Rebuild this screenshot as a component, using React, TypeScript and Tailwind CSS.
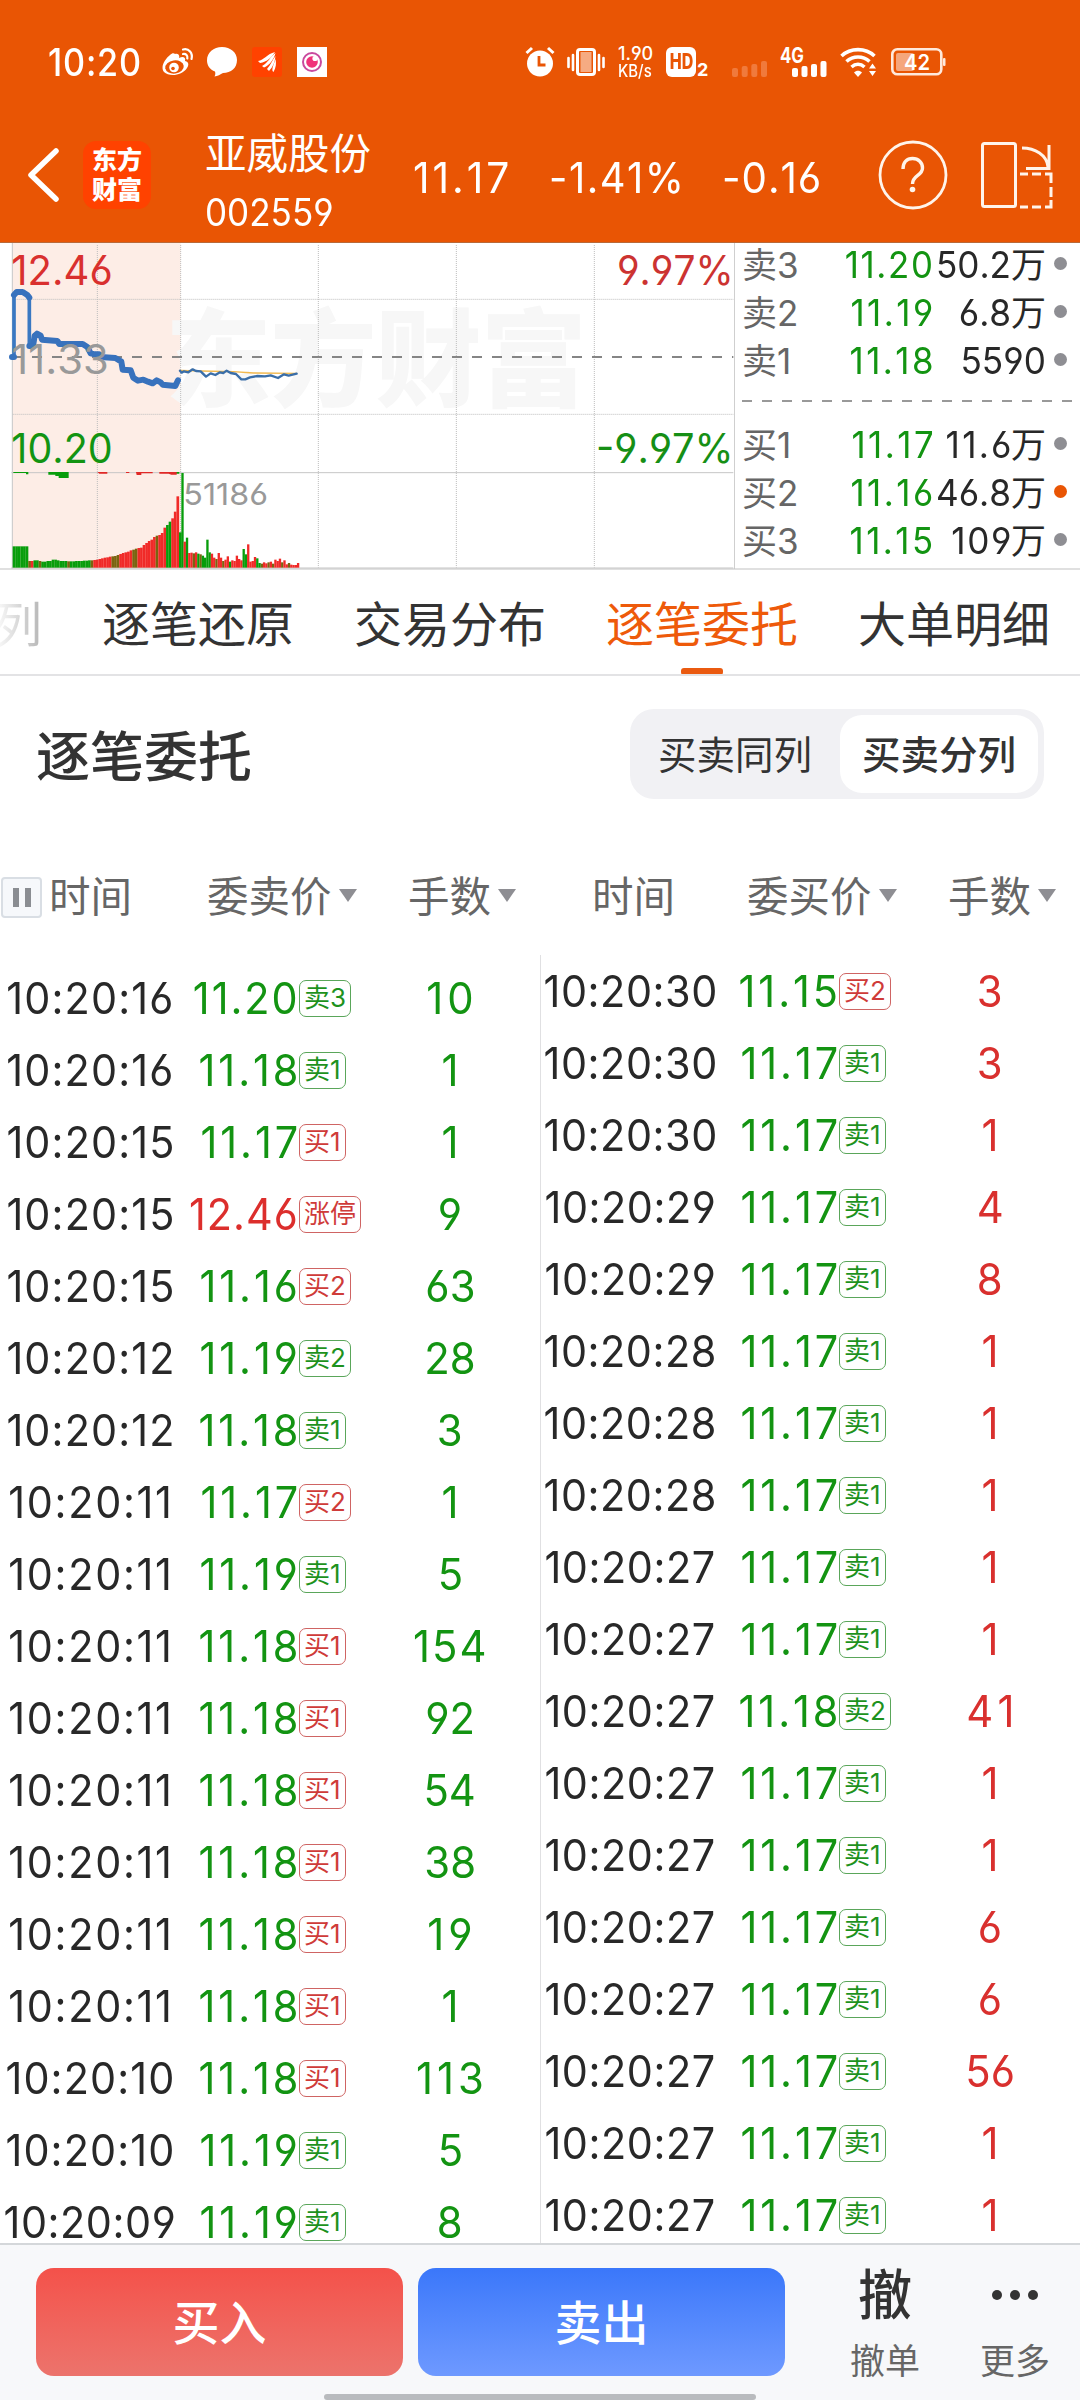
import React from 'react';

type Side = 'up' | 'down';

interface Order {
  time: string;
  price: string;
  tag: string;
  lots: number;
}

interface Quote {
  label: string;
  price: string;
  volume: string;
  active?: boolean;
}

const parseOrders = (rows: string[]): Order[] =>
  rows.map((row) => {
    const [time, price, tag, lots] = row.split(' ');
    return { time: `10:20:${time}`, price, tag, lots: Number(lots) };
  });

const sellOrders = parseOrders([
  '16 11.20 卖3 10',
  '16 11.18 卖1 1',
  '15 11.17 买1 1',
  '15 12.46 涨停 9',
  '15 11.16 买2 63',
  '12 11.19 卖2 28',
  '12 11.18 卖1 3',
  '11 11.17 买2 1',
  '11 11.19 卖1 5',
  '11 11.18 买1 154',
  '11 11.18 买1 92',
  '11 11.18 买1 54',
  '11 11.18 买1 38',
  '11 11.18 买1 19',
  '11 11.18 买1 1',
  '10 11.18 买1 113',
  '10 11.19 卖1 5',
  '09 11.19 卖1 8',
]);

const buyOrders = parseOrders([
  '30 11.15 买2 3',
  '30 11.17 卖1 3',
  '30 11.17 卖1 1',
  '29 11.17 卖1 4',
  '29 11.17 卖1 8',
  '28 11.17 卖1 1',
  '28 11.17 卖1 1',
  '28 11.17 卖1 1',
  '27 11.17 卖1 1',
  '27 11.17 卖1 1',
  '27 11.18 卖2 41',
  '27 11.17 卖1 1',
  '27 11.17 卖1 1',
  '27 11.17 卖1 6',
  '27 11.17 卖1 6',
  '27 11.17 卖1 56',
  '27 11.17 卖1 1',
  '27 11.17 卖1 1',
]);

const asks: Quote[] = [
  { label: '卖3', price: '11.20', volume: '50.2万' },
  { label: '卖2', price: '11.19', volume: '6.8万' },
  { label: '卖1', price: '11.18', volume: '5590' },
];

const bids: Quote[] = [
  { label: '买1', price: '11.17', volume: '11.6万' },
  { label: '买2', price: '11.16', volume: '46.8万', active: true },
  { label: '买3', price: '11.15', volume: '109万' },
];

// bar colours: r = red, g = green, d = dark overlap
const auctionHeights = [
  64, 64, 64, 64, 64, 64, 20, 20, 22, 22, 20, 18, 18, 20, 20, 24, 24, 22, 20, 20, 20, 19, 19, 19, 20, 20, 20, 21, 21, 22,
  22, 23, 24, 26, 28, 30, 31, 33, 34, 35, 38, 41, 44, 46, 48, 52, 54, 57, 59, 60, 68, 74, 80, 84, 92, 96, 98, 104, 120,
  128, 138, 148, 168, 214,
];
const auctionColors = 'ggggggdrggdggggggggggdggggggggdrrrrrrrdddrrrrrddrrrrrrrdrrrggrrrg';

const sessionHeights = [
  284, 78, 90, 44, 45, 43, 46, 42, 40, 36, 30, 84, 46, 42, 30, 26, 44, 30, 20, 24, 34, 18, 22, 20, 36, 26, 22, 56, 40,
  70, 18, 20, 32, 28, 14, 12, 16, 13, 16, 18, 12, 24, 20, 27, 16, 22, 10, 14, 9, 8, 8, 14,
];
const sessionColors = 'grgrrdrgdggggrrdrrdrrgrrrrrggrrrrggdrrdrdrrrdrrdrrrrr';

const barFill: Record<string, string> = { r: '#f02a28', g: '#079d0b', d: '#7a6410' };

const numClass =
  "inline-block [font-kerning:none] font-['Inter','Noto_Sans_CJK_SC',sans-serif] [font-feature-settings:'cv03','cv04']";

// Digits set slightly condensed; every "1" gets extra room so the columns stay even
const Num: React.FC<{ value: string | number; className?: string }> = ({ value, className = '' }) => {
  const text = String(value);
  const ones = text.split('1').length - 1;
  const spacing = text.length > 1 ? (ones * 0.096) / (text.length - 1) : 0;
  return (
    <span className={`${numClass} ${className}`} style={{ letterSpacing: `${spacing}em`, marginRight: `${-spacing}em` }}>
      {text}
    </span>
  );
};

const StatusBar: React.FC = () => (
  <div className="flex h-[110px] items-center pt-[14px] pl-[48px] text-white">
    <span className="w-[114px] text-[38px] leading-none font-medium">
      <Num value="10:20" className="origin-left scale-x-[0.9]" />
    </span>
    <svg width="32" height="30" viewBox="0 0 32 30" fill="none">
      <path
        d="M13 7C16 6 18 8 17 11C21 9 24 10 23 14C27 15 27 18 25 21C20 29 7 30 2 25C-2 20 3 12 8 8C10 6 12 6 13 7Z"
        fill="#fff"
      />
      <ellipse cx="12.5" cy="20" rx="9.3" ry="6.6" fill="#e95504" transform="rotate(-8 12.5 20)" />
      <circle cx="12" cy="20.500" r="4.800" fill="#fff" />
      <circle cx="11" cy="21.500" r="1.800" fill="#e95504" />
      <path d="M21 2.500C27 1 31 6 29.500 12M21 7C24 6.500 26 8.500 25.300 11.500" stroke="#fff" strokeWidth="2.200" strokeLinecap="round" />
    </svg>
    <svg width="30" height="30" viewBox="0 0 30 30" className="ml-[13px]" fill="#fff">
      <path d="M15 0C23.500 0 30 5.500 30 13C30 21 24 26 16 26C13.500 27.500 10.500 29 7.500 29.500C8.500 28 8.500 26 8 24.500C3 22.500 0 18.500 0 13.500C0 5.500 6.500 0 15 0Z" />
    </svg>
    <svg width="30" height="30" viewBox="0 0 30 30" className="ml-[15px]">
      <rect width="30" height="30" rx="3" fill="#ff4200" />
      <g fill="#fff">
        <path d="M6 14C12 13 15 7 23 5C20 10 15 15 8 16Z" />
        <path d="M10 19C16 16 18 10 23.500 6C22 12 18 18 12 20.500Z" />
        <path d="M15 22C19 18 20 13 23.500 9C23 15 21 20 17 24Z" />
        <path d="M20.500 24C20 20 22 17 23.500 12C24.500 16 24 21 21.500 25Z" />
      </g>
    </svg>
    <svg width="30" height="30" viewBox="0 0 30 30" className="ml-[15px]">
      <rect width="30" height="30" fill="#fff" />
      <circle cx="15" cy="15" r="9" fill="none" stroke="#c84a9e" strokeWidth="2" />
      <circle cx="15" cy="15" r="5.800" fill="#f0327a" />
      <circle cx="18" cy="11.500" r="2.600" fill="#fff" />
    </svg>
    <svg width="30" height="32" viewBox="0 0 30 32" className="ml-[198px]">
      <circle cx="15" cy="17.500" r="13" fill="#fff" />
      <path d="M1.500 7L7 2M28.500 7L23 2" stroke="#fff" strokeWidth="3" />
      <path d="M14 10V19H20.500" stroke="#e95504" strokeWidth="2.800" fill="none" />
    </svg>
    <svg width="38" height="30" viewBox="0 0 38 30" className="ml-[12px]" stroke="#fff">
      <rect x="10.500" y="2.500" width="17" height="25" rx="2.500" fill="none" strokeWidth="3" />
      <rect x="13.500" y="5" width="11" height="20" fill="#f6ab82" stroke="none" />
      <path d="M6 8V23M1.500 11V20M32 8V23M36.500 11V20" strokeWidth="2.600" strokeLinecap="round" />
    </svg>
    <div className="ml-[13px] w-[48px] text-[18px] leading-[17px] font-medium">
      <div className={`${numClass} origin-left`}>1.90</div>
      <div className={`${numClass} origin-left scale-x-[0.88] text-[17px]`}>KB/s</div>
    </div>
    <div className="flex items-end">
      <div className="flex h-[30px] w-[30px] items-center justify-center rounded-[6px] bg-white text-[21px] font-extrabold text-[#e95504]">
        <span className="inline-block scale-x-[0.76]">HD</span>
      </div>
      <span className="ml-[1px] text-[18px] leading-[14px] font-bold">2</span>
    </div>
    <svg width="36" height="30" viewBox="0 0 36 30" className="ml-[24px]" fill="#f07a3c">
      <rect x="0" y="21" width="6" height="9" rx="2" />
      <rect x="9.700" y="19" width="6" height="11" rx="2" />
      <rect x="19.300" y="17" width="6" height="13" rx="2" />
      <rect x="29" y="14" width="6" height="16" rx="2" />
    </svg>
    <svg width="48" height="30" viewBox="0 0 48 30" className="ml-[12px]" fill="#fff">
      <text x="0" y="15.500" fontSize="21" fontWeight="700" textLength="24" lengthAdjust="spacingAndGlyphs">
        4G
      </text>
      <rect x="12" y="21" width="6" height="9" rx="2" />
      <rect x="21.500" y="19" width="6" height="11" rx="2" />
      <rect x="31" y="17" width="6" height="13" rx="2" />
      <rect x="40.500" y="14" width="6" height="16" rx="2" />
    </svg>
    <svg width="37" height="30" viewBox="0 0 37 30" className="ml-[12px]" fill="none" stroke="#fff" strokeWidth="3.600">
      <path d="M1.500 9C10.500 0.500 25.500 0.500 34.500 9" />
      <path d="M6.500 14.500C13 8.500 23 8.500 29.500 14.500" />
      <path d="M11.500 20C15.500 16.500 20.500 16.500 24.500 20" />
      <path d="M14 25.500C16.500 23 19.500 23 22 25.500L18 30Z" fill="#fff" stroke="none" />
      <path d="M29 21.500L32.500 16.500L36 21.500ZM29 24L32.500 29L36 24Z" fill="#fff" stroke="none" />
    </svg>
    <svg width="55" height="30" viewBox="0 0 55 30" className="ml-[14px]">
      <rect x="1.300" y="2.300" width="49" height="25" rx="5" fill="none" stroke="#ffe9dc" strokeWidth="2.600" />
      <rect x="5" y="6" width="18" height="18" rx="2" fill="#f5a67c" />
      <rect x="52" y="11" width="2.500" height="8" rx="1" fill="#ffe9dc" />
      <text x="13" y="23" fontSize="22" fontWeight="600" fill="#fff" textLength="26" lengthAdjust="spacingAndGlyphs">
        42
      </text>
    </svg>
  </div>
);

const StockHeader: React.FC = () => (
  <div className="flex h-[132px] items-start pl-[26px] text-white">
    <svg width="34" height="58" viewBox="0 0 34 58" className="mt-[36px]" fill="none">
      <path d="M30 5L5 29L30 53" stroke="#fff" strokeWidth="5.500" strokeLinecap="round" strokeLinejoin="round" />
    </svg>
    <div className="mt-[31px] ml-[23px] flex h-[68px] w-[68px] flex-col items-center justify-center rounded-[13px] bg-[#ff4200] text-[25px] leading-[30px] font-black">
      <span>东方</span>
      <span>财富</span>
    </div>
    <div className="ml-[54px] w-[208px]">
      <div className="mt-[19px] text-[41.5px] leading-[50px] whitespace-nowrap">亚威股份</div>
      <div className="mt-[14px] text-[37.5px] leading-[40px]">
        <span className={`${numClass} origin-left scale-x-[0.935]`}>002559</span>
      </div>
    </div>
    <div className="mt-[42px] flex text-[42px] leading-[52px] whitespace-nowrap">
      <span className="w-[136px]">
        <Num value="11.17" className="origin-left scale-x-[0.97]" />
      </span>
      <span className="w-[173px]">
        <Num value="-1.41%" className="origin-left scale-x-[0.95]" />
      </span>
      <span className="w-[156px]">
        <Num value="-0.16" className="origin-left scale-x-[0.96]" />
      </span>
    </div>
    <svg width="70" height="70" viewBox="0 0 70 70" className="mt-[30px]" fill="none" stroke="#fff4ea">
      <circle cx="35" cy="35" r="33" strokeWidth="2.800" />
      <path d="M25 29C25 22 29 18.500 34.500 18.500C40.500 18.500 44.500 22.500 44.500 28C44.500 36 34.500 35 34.500 44" strokeWidth="3.400" />
      <circle cx="34.500" cy="49.500" r="2.800" fill="#fff4ea" stroke="none" />
    </svg>
    <svg width="74" height="70" viewBox="0 0 74 70" className="mt-[30px] ml-[33px]" fill="none" stroke="#fff4ea" strokeWidth="3">
      <rect x="1.500" y="3.500" width="33" height="63" rx="2" />
      <path d="M41 8C54 8 66 15 67 27M68 5V28.500H45" />
      <path d="M39 34H47M51 34H60M64 34H70V43M70 47V57M70 60V67H64M60 67H51M47 67H39" />
    </svg>
  </div>
);

const TrendChart: React.FC = () => (
  <svg width="735" height="326" viewBox="0 0 735 326" className="shrink-0">
    <g transform="translate(0 -8) scale(0.33333)">
      <rect x="38" y="24" width="504" height="976" fill="#fdede6" />
      <text
        x="496"
        y="488"
        fontSize="318"
        fontWeight="900"
        fill="#f7f7f7"
        textLength="1264"
        lengthAdjust="spacing"
      >
        东方财富
      </text>
      <g stroke="#bcbcbc" strokeWidth="3" strokeDasharray="3 3" fill="none">
        <path d="M292 30V998M542 30V998M955 30V998M1369 30V998M1783 30V998" />
        <path d="M38 193H2200M38 538H2200" />
      </g>
      <path d="M37 24V1000M34 713H2200M34 999H2200M2204 24V1003" stroke="#c6c6c6" strokeWidth="3" fill="none" />
      <path d="M36 366H2200" stroke="#858585" strokeWidth="6" strokeDasharray="30 30" />

      {auctionHeights.map((h, i) => (
        <rect key={i} x={38 + i * 7.8} y={998 - h} width={8} height={h} fill={barFill[auctionColors[i]]} />
      ))}
      <rect x="537" y="892" width="8" height="106" fill={barFill.g} />
      {sessionHeights.map((h, i) => (
        <rect key={i} x={544 + i * 6.8} y={998 - h} width={7} height={h} fill={barFill[sessionColors[i]]} />
      ))}
      <path d="M40 711H85V718H78V714H40ZM145 711H206V729H176V723H166V719H145ZM528 711H538V716H528Z" fill="#079d0b" />
      <path d="M292 711H322V716H298ZM378 711H388V714H378ZM408 711H458V715H424V720H410ZM478 711H530V719H514L506 716H478Z" fill="#e02826" />

      <g fill="none" strokeLinejoin="round" strokeLinecap="round">
        <path d="M542 406L600 408L700 410L760 414L890 415" stroke="#f2b84c" strokeWidth="4" />
        <path
          d="M42 366V180M88 184V330"
          stroke="#3a78c2"
          strokeWidth="11"
        />
        <path
          d="M36 366H42M42 180L50 171H68L82 180L88 188M88 333H99L104 302L111 296L122 302L126 314L172 318L178 327H248L262 336L272 355L285 358H298L302 366L346 369L364 380L368 404L392 406L400 428L414 437L430 434L444 440L458 445L470 436L482 442L488 449L526 453L534 436"
          stroke="#3872bd"
          strokeWidth="18"
        />
        <path
          d="M540 407L545 413L552 409L565 412L578 403L588 408L602 409L618 425L632 415L646 420L660 412L670 414L680 407L692 414L708 417L724 433L736 433L750 427L772 423L795 424L812 421L834 429L852 418L866 422L890 416"
          stroke="#3a6ea8"
          strokeWidth="7"
        />
      </g>

      <g className="font-['Inter',sans-serif] [font-feature-settings:'cv03','cv04'] [font-kerning:none]" fontSize="122">
        <text x="34" y="150" fill="#d9302e" textLength="304" lengthAdjust="spacingAndGlyphs">
          12.46
        </text>
        <text x="34" y="416" fill="#999" textLength="292" lengthAdjust="spacingAndGlyphs">
          11.33
        </text>
        <text x="34" y="683" fill="#139412" textLength="304" lengthAdjust="spacingAndGlyphs">
          10.20
        </text>
        <text x="1851" y="150" fill="#cc3331" textLength="350" lengthAdjust="spacingAndGlyphs">
          9.97%
        </text>
        <text x="1788" y="683" fill="#168f15" textLength="413" lengthAdjust="spacingAndGlyphs">
          -9.97%
        </text>
        <text x="550" y="810" fontSize="91" fill="#999" textLength="254" lengthAdjust="spacingAndGlyphs">
          51186
        </text>
      </g>
    </g>
  </svg>
);

const QuoteRow: React.FC<{ quote: Quote }> = ({ quote }) => (
  <div className="flex h-[48px] items-center text-[35px] leading-[48px] whitespace-nowrap">
    <span className="w-[60px] text-[#666]">
      <span className={`${numClass} origin-left`}>{quote.label}</span>
    </span>
    <span className="w-[131px] text-right text-[37px] text-[#139412]">
      <Num value={quote.price} className="origin-right scale-x-[0.94]" />
    </span>
    <span className="flex w-[113px] items-center justify-end text-[#282828]">
      <Num value={quote.volume.replace('万', '')} className="origin-right scale-x-[0.95] text-[37px]" />
      {quote.volume.endsWith('万') && <span>万</span>}
    </span>
    <span className={`-mt-[3px] ml-[8px] h-[13px] w-[13px] rounded-full ${quote.active ? 'bg-[#e95504]' : 'bg-[#8e8e93]'}`} />
  </div>
);

const OrderBook: React.FC = () => (
  <div className="-mt-[2px] flex-1 pl-[7px]">
    {asks.map((quote) => (
      <QuoteRow key={quote.label} quote={quote} />
    ))}
    <svg width="332" height="36" viewBox="0 0 332 36" className="block">
      <path d="M0 16H332" stroke="#999" strokeWidth="2" strokeDasharray="10 10" />
    </svg>
    {bids.map((quote) => (
      <QuoteRow key={quote.label} quote={quote} />
    ))}
  </div>
);

const Tabs: React.FC = () => (
  <div className="flex h-[106px] justify-end gap-[60px] overflow-hidden border-b-2 border-[#e3e3e5] pr-[30px] text-[48px] leading-[110px] whitespace-nowrap text-[#333]">
    <span className="bg-gradient-to-r from-white from-75% to-[#b5b5b5] bg-clip-text text-transparent">买卖队列</span>
    <span>逐笔还原</span>
    <span>交易分布</span>
    <span className="relative text-[#ee5a0a]">
      逐笔委托
      <i className="absolute top-[98px] left-[75px] h-[7px] w-[42px] rounded-[3px] bg-[#ea5a10]" />
    </span>
    <span>大单明细</span>
  </div>
);

const SortArrow: React.FC = () => (
  <svg width="18" height="13" viewBox="0 0 18 13" className="mb-[4px] ml-[7px]">
    <path d="M0 0H18L9 13Z" fill="#8e8e93" />
  </svg>
);

const ColumnHeads: React.FC<{ priceLabel: string; paused?: boolean }> = ({ priceLabel, paused }) => (
  <div className="flex w-[540px] items-center text-[41.5px] leading-[50px] text-[#666]">
    <div className={`flex w-[207px] items-center ${paused ? 'pl-[1px]' : 'pl-[52px]'}`}>
      {paused && (
        <div className="mr-[7px] flex h-[41px] w-[41px] items-center justify-center gap-[6px] rounded-[4px] border-2 border-[#d9dee4] bg-[#f6f8fb]">
          <i className="h-[19px] w-[6px] bg-[#8a8d92]" />
          <i className="h-[19px] w-[6px] bg-[#8a8d92]" />
        </div>
      )}
      时间
    </div>
    <div className="flex w-[201px] items-center">
      {priceLabel}
      <SortArrow />
    </div>
    <div className="flex items-center">
      手数
      <SortArrow />
    </div>
  </div>
);

const OrderRow: React.FC<{ order: Order; side: Side }> = ({ order, side }) => {
  const priceColor = order.tag === '涨停' ? 'text-[#dc2e2c]' : 'text-[#139412]';
  const tagColor = order.tag.startsWith('卖') ? 'border-[#5aa65a] text-[#1d921d]' : 'border-[#cf6463] text-[#cf3b39]';
  return (
    <div className="flex h-[72px] items-center text-[44px] leading-[72px] whitespace-nowrap">
      <span className="flex w-[180px] justify-center text-[#282828]">
        <Num value={order.time} className="scale-x-[0.94]" />
      </span>
      <span className={`flex w-[118px] justify-end ${priceColor}`}>
        <Num value={order.price} className="origin-right scale-x-[0.94]" />
      </span>
      <span className="ml-[1px] flex w-[61px]">
        <span className={`${numClass} h-[37px] rounded-[7px] border px-[4px] text-[26px] leading-[34px] ${tagColor}`}>
          {order.tag}
        </span>
      </span>
      <span className={`flex w-[180px] justify-center ${side === 'up' ? 'text-[#d9302e]' : 'text-[#139412]'}`}>
        <Num value={order.lots} className="scale-x-[0.95]" />
      </span>
    </div>
  );
};

const OrderTable: React.FC = () => (
  <div className="flex h-[1288px] overflow-hidden">
    <div className="w-[540px] pt-[7px]">
      {sellOrders.map((order, i) => (
        <OrderRow key={i} order={order} side="down" />
      ))}
    </div>
    <div className="w-[540px] shadow-[inset_1px_0_0_#e0e0e2]">
      {buyOrders.map((order, i) => (
        <OrderRow key={i} order={order} side="up" />
      ))}
    </div>
  </div>
);

const TradeBar: React.FC = () => (
  <div className="flex h-[157px] flex-col border-t-2 border-[#d4d7da] bg-[#f7f8fa]">
    <div className="mt-[23px] flex pl-[36px]">
      <button className="h-[108px] w-[367px] rounded-[18px] bg-gradient-to-b from-[#f4514a] to-[#ec736c] pt-[2px] text-[47px] font-medium text-white">
        买入
      </button>
      <button className="ml-[15px] h-[108px] w-[367px] rounded-[18px] bg-gradient-to-b from-[#3a77fa] to-[#6e99ff] pt-[2px] text-[47px] font-medium text-white">
        卖出
      </button>
      <div className="ml-[64px] w-[72px] text-center">
        <div className="text-[54px] leading-[56px] font-medium text-[#333]">撤</div>
        <div className="mt-[18px] text-[35px] leading-[38px] text-[#666]">撤单</div>
      </div>
      <div className="ml-[58px] w-[72px]">
        <div className="flex h-[54px] items-center justify-center gap-[8px]">
          <i className="h-[10px] w-[10px] rounded-full bg-[#333]" />
          <i className="h-[10px] w-[10px] rounded-full bg-[#333]" />
          <i className="h-[10px] w-[10px] rounded-full bg-[#333]" />
        </div>
        <div className="mt-[20px] text-center text-[35px] leading-[38px] text-[#666]">更多</div>
      </div>
    </div>
    <div className="mt-[14px] ml-[324px] h-[7px] w-[432px] rounded-full bg-[#b9bbbe]" />
  </div>
);

const App: React.FC = () => {
  return (
    <div className="h-[2400px] w-[1080px] overflow-hidden bg-white font-['Inter','Noto_Sans_CJK_SC',sans-serif]">
      <div className="h-[243px] border-b border-[#b86a3a] bg-[#e95504]">
        <StatusBar />
        <StockHeader />
      </div>
      <div className="flex h-[327px] border-b-2 border-[#e0e0e0]">
        <TrendChart />
        <OrderBook />
      </div>
      <Tabs />
      <div className="flex h-[160px] items-center justify-between pr-[36px] pl-[36px]">
        <h2 className="pt-[2px] text-[54px] font-medium text-[#333]">逐笔委托</h2>
        <div className="-mt-[4px] flex h-[90px] w-[414px] items-center rounded-[24px] bg-[#f1f1f4] pl-[6px] text-[38.5px] text-[#333]">
          <span className="w-[204px] pt-[3px] pr-[6px] text-center">买卖同列</span>
          <span className="flex h-[78px] w-[198px] items-center justify-center rounded-[22px] bg-white pt-[3px] font-medium">
            买卖分列
          </span>
        </div>
      </div>
      <div className="flex h-[119px] items-center pt-[3px]">
        <ColumnHeads priceLabel="委卖价" paused />
        <ColumnHeads priceLabel="委买价" />
      </div>
      <OrderTable />
      <TradeBar />
    </div>
  );
};

export default App;
